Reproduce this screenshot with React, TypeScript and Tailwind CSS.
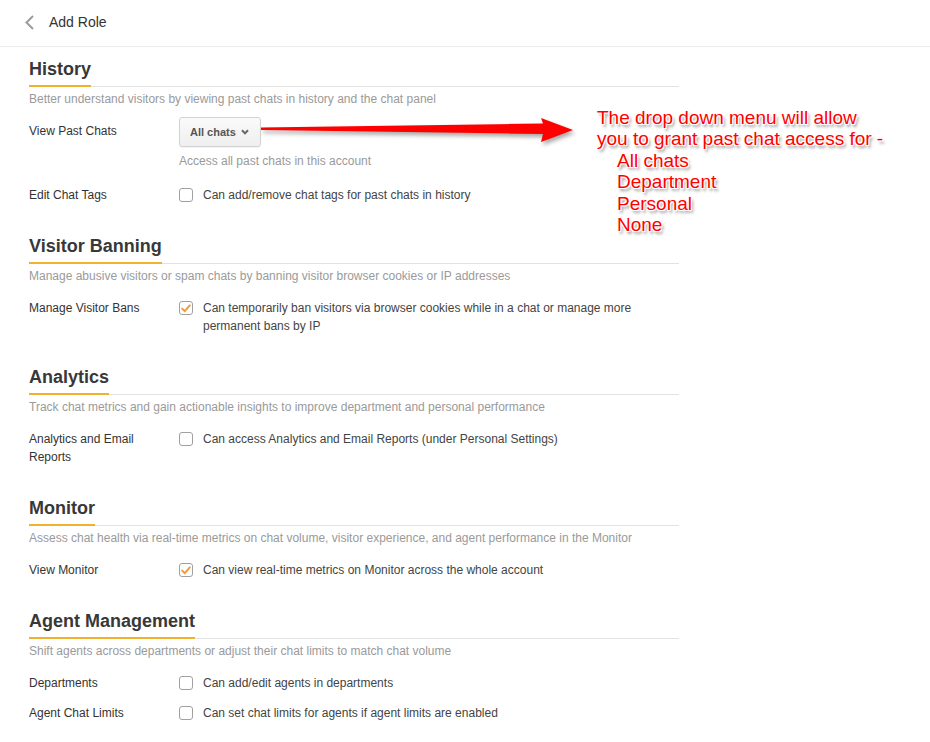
import React from 'react';

const font = "font-['Liberation_Sans',Arial,sans-serif]";

const Checkbox = ({ checked }: { checked?: boolean }) => (
  <span className="mt-[2px] flex h-[14px] w-[14px] shrink-0 items-center justify-center rounded-[3px] border border-[#a0a0a0] bg-white">
    {checked && (
      <svg width="10" height="9" viewBox="0 0 10 9">
        <polyline points="1.2,4.6 3.8,7.2 8.8,1.4" fill="none" stroke="#f39a3a" strokeWidth="2" strokeLinecap="round" strokeLinejoin="round" />
      </svg>
    )}
  </span>
);

const CheckRow = ({ label, text, checked, className = '' }: { label: string; text: string; checked?: boolean; className?: string }) => (
  <div className={`flex leading-[18px] ${className}`}>
    <div className="w-[150px] shrink-0 pr-[20px] text-[#333]">{label}</div>
    <div className="flex gap-[10px] text-[#444]">
      <Checkbox checked={checked} />
      <span>{text}</span>
    </div>
  </div>
);

const Section = ({ title, desc, children, className = '' }: { title: string; desc: string; children: React.ReactNode; className?: string }) => (
  <section className={className}>
    <div className="flex border-b border-[#e2e2e2]">
      <h2 className="-mb-px border-b-2 border-[#f1b12d] pb-[4px] text-[18px] leading-[24px] font-bold text-[#383838]">{title}</h2>
    </div>
    <p className="mt-[3px] leading-[18px] text-[#9a9a9a]">{desc}</p>
    {children}
  </section>
);

export default function App() {
  return (
    <div className={`relative h-[742px] w-[930px] overflow-hidden bg-white text-[12px] ${font}`}>
      {/* top bar */}
      <header className="flex h-[47px] items-center border-b border-[#ececec] pb-[1px]">
        <svg className="ml-[25px]" width="10" height="15" viewBox="0 0 10 15">
          <polyline points="8,1 1.5,7.5 8,14" fill="none" stroke="#9c9c9c" strokeWidth="2" />
        </svg>
        <span className="ml-[14px] text-[14px] text-[#333]">Add Role</span>
      </header>

      <main className="w-[679px] pl-[29px] pt-[10px]">
        <Section title="History" desc="Better understand visitors by viewing past chats in history and the chat panel">
          <div className="mt-[9px] flex">
            <div className="w-[150px] shrink-0 pt-[5px] leading-[18px] text-[#333]">View Past Chats</div>
            <div>
              <button className="flex h-[30px] w-[82px] items-center justify-between rounded-[3px] border border-[#d2d2d2] bg-gradient-to-b from-[#fafafa] to-[#efefef] pl-[10px] pr-[11px] text-[11px] font-bold text-[#555] shadow-[0_1px_1px_rgba(0,0,0,0.05)]">
                All chats
                <svg width="8" height="6" viewBox="0 0 8 6">
                  <polyline points="1,1.2 4,4.4 7,1.2" fill="none" stroke="#666" strokeWidth="2" />
                </svg>
              </button>
              <div className="mt-[5px] leading-[18px] text-[#9a9a9a]">Access all past chats in this account</div>
            </div>
          </div>
          <CheckRow className="mt-[16px]" label="Edit Chat Tags" text="Can add/remove chat tags for past chats in history" />
        </Section>

        <Section className="mt-[30px]" title="Visitor Banning" desc="Manage abusive visitors or spam chats by banning visitor browser cookies or IP addresses">
          <CheckRow className="mt-[14px]" checked label="Manage Visitor Bans" text="Can temporarily ban visitors via browser cookies while in a chat or manage more permanent bans by IP" />
        </Section>

        <Section className="mt-[30px]" title="Analytics" desc="Track chat metrics and gain actionable insights to improve department and personal performance">
          <CheckRow className="mt-[14px]" label="Analytics and Email Reports" text="Can access Analytics and Email Reports (under Personal Settings)" />
        </Section>

        <Section className="mt-[30px]" title="Monitor" desc="Assess chat health via real-time metrics on chat volume, visitor experience, and agent performance in the Monitor">
          <CheckRow className="mt-[14px]" checked label="View Monitor" text="Can view real-time metrics on Monitor across the whole account" />
        </Section>

        <Section className="mt-[30px]" title="Agent Management" desc="Shift agents across departments or adjust their chat limits to match chat volume">
          <CheckRow className="mt-[14px]" label="Departments" text="Can add/edit agents in departments" />
          <CheckRow className="mt-[12px]" label="Agent Chat Limits" text="Can set chat limits for agents if agent limits are enabled" />
        </Section>
      </main>

      {/* annotation overlay */}
      <svg className="absolute left-[255px] top-[110px] drop-shadow-[2px_3px_2px_rgba(0,0,0,0.35)]" width="330" height="40" viewBox="0 0 330 40">
        <polygon points="6,17.5 288,13.5 286,8 318,20 286,32 288,24 6,20" fill="#ff0000" />
      </svg>
      <div className="absolute left-[597px] top-[107px] text-[19px] leading-[21.4px] text-[#ff0000] [text-shadow:-1px_-1px_0_#fff,1px_-1px_0_#fff,-1px_1px_0_#fff,1px_1px_0_#fff,0_0_1px_#f00,2px_3px_3px_rgba(0,0,0,0.45)]">
        <div>The drop down menu will allow</div>
        <div>you to grant past chat access for -</div>
        <div className="pl-[20px]">All chats</div>
        <div className="pl-[20px]">Department</div>
        <div className="pl-[20px]">Personal</div>
        <div className="pl-[20px]">None</div>
      </div>
    </div>
  );
}
